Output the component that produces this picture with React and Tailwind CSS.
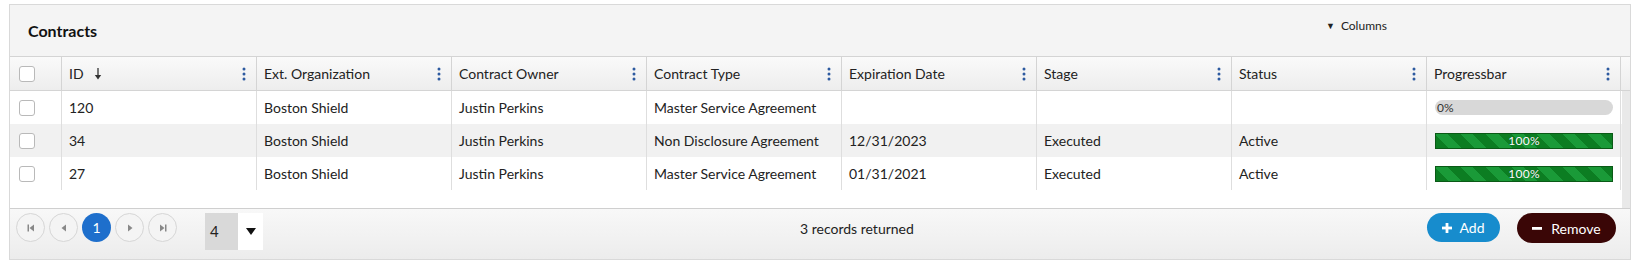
import React from 'react';

const columns = [
  'ID',
  'Ext. Organization',
  'Contract Owner',
  'Contract Type',
  'Expiration Date',
  'Stage',
  'Status',
  'Progressbar',
];

const rows = [
  { id: '120', org: 'Boston Shield', owner: 'Justin Perkins', type: 'Master Service Agreement', date: '', stage: '', status: '', progress: 0 },
  { id: '34', org: 'Boston Shield', owner: 'Justin Perkins', type: 'Non Disclosure Agreement', date: '12/31/2023', stage: 'Executed', status: 'Active', progress: 100 },
  { id: '27', org: 'Boston Shield', owner: 'Justin Perkins', type: 'Master Service Agreement', date: '01/31/2021', stage: 'Executed', status: 'Active', progress: 100 },
];

function Kebab() {
  return (
    <svg width="4" height="14" viewBox="0 0 4 14" className="shrink-0">
      <circle cx="2" cy="2" r="1.5" fill="#2d5aa0" />
      <circle cx="2" cy="7" r="1.5" fill="#2d5aa0" />
      <circle cx="2" cy="12" r="1.5" fill="#2d5aa0" />
    </svg>
  );
}

function SortDown() {
  return (
    <svg width="8" height="12" viewBox="0 0 8 12" className="ml-[10px]">
      <line x1="4" y1="0" x2="4" y2="8" stroke="#333" strokeWidth="1.3" />
      <path d="M0.8 7 L7.2 7 L4 11.5 Z" fill="#333" />
    </svg>
  );
}

function Checkbox() {
  return <div className="w-[16px] h-[16px] rounded-[3px] border border-[#b9b9b9] bg-white" />;
}

function Progress({ value }) {
  if (value === 0) {
    return (
      <div className="w-[178px] h-[15px] rounded-full bg-[#d8d8d8] flex items-center pl-[2px] text-[12px] leading-none text-[#333]">
        0%
      </div>
    );
  }
  return (
    <div className="w-[178px] h-[16px] border border-[#0a5a16] bg-[repeating-linear-gradient(45deg,#0c7d22_0px,#0c7d22_9px,#1a9a38_9px,#1a9a38_18px)] flex items-center justify-center text-[12px] leading-none text-white tracking-[0.3px] [text-shadow:0_0_1px_rgba(0,0,0,0.4)]">
      {value}%
    </div>
  );
}

function PagerButton({ children, active }) {
  return (
    <div
      className={
        active
          ? 'w-[29px] h-[29px] rounded-full bg-[#1e6fcc] flex items-center justify-center text-white text-[14px]'
          : 'w-[29px] h-[29px] rounded-full border border-[#d6d6d6] bg-[#f4f4f4] flex items-center justify-center'
      }
    >
      {children}
    </div>
  );
}

export default function App() {
  return (
    <div className="w-[1635px] h-[263px] bg-white pt-[4px] pl-[9px] font-['Lato','Liberation_Sans',sans-serif] text-[#222]">
      <div className="w-[1622px] border border-[#d9d9d9] flex flex-col">
        {/* Title bar */}
        <div className="h-[51px] bg-[#f4f4f4] flex items-start relative">
          <div className="pl-[18px] pt-[14px] text-[16px] font-bold text-[#111]">Contracts</div>
          <div className="absolute left-[1316px] top-[12px] flex items-center gap-[6px] text-[12px] text-[#222]">
            <span className="text-[9px]">▼</span>
            <span>Columns</span>
          </div>
        </div>

        {/* Header row */}
        <div className="flex h-[35px] border-t border-b border-[#d4d4d4] bg-[linear-gradient(#fafafa,#ededed)]">
          <div className="w-[51px] flex items-center pl-[9px]">
            <Checkbox />
          </div>
          {columns.map((c, i) => (
            <div
              key={c}
              className={
                'w-[195px] border-l border-[#d4d4d4] flex items-center justify-between pl-[7px] pr-[10px] text-[14px] text-[#222]' +
                (i === columns.length - 1 ? ' border-r' : '')
              }
            >
              <div className="flex items-center">
                {c}
                {i === 0 && <SortDown />}
              </div>
              <Kebab />
            </div>
          ))}
        </div>

        {/* Body */}
        <div className="flex h-[117px]">
          <div className="w-[1612px] bg-white">
            {rows.map((r, ri) => {
              const cells = [r.id, r.org, r.owner, r.type, r.date, r.stage, r.status];
              return (
                <div key={r.id} className={'flex h-[33px] ' + (ri === 1 ? 'bg-[#f1f1f1]' : 'bg-white')}>
                  <div className="w-[51px] flex items-center pl-[9px]">
                    <Checkbox />
                  </div>
                  {cells.map((t, ci) => (
                    <div key={ci} className="w-[195px] border-l border-[#dedede] flex items-center pl-[7px] text-[14px]">
                      {t}
                    </div>
                  ))}
                  <div className="w-[195px] border-l border-r border-[#dedede] flex items-center pl-[8px]">
                    <Progress value={r.progress} />
                  </div>
                </div>
              );
            })}
          </div>
          <div className="flex-1 bg-[#e9e9e9]" />
        </div>

        {/* Footer */}
        <div className="h-[51px] border-t border-[#cfcfcf] bg-[linear-gradient(#f8f8f8,#ececec)] flex items-start pt-[4px] pl-[6px] pr-[14px]">
          <div className="flex gap-[4px]">
            <PagerButton>
              <svg width="8" height="8" viewBox="0 0 8 8"><rect x="0.5" y="0.5" width="1.5" height="7" fill="#888" /><path d="M7 0.5 L7 7.5 L2.5 4 Z" fill="#888" /></svg>
            </PagerButton>
            <PagerButton>
              <svg width="6" height="8" viewBox="0 0 6 8"><path d="M5 0.5 L5 7.5 L0.5 4 Z" fill="#888" /></svg>
            </PagerButton>
            <PagerButton active>1</PagerButton>
            <PagerButton>
              <svg width="6" height="8" viewBox="0 0 6 8"><path d="M1 0.5 L1 7.5 L5.5 4 Z" fill="#888" /></svg>
            </PagerButton>
            <PagerButton>
              <svg width="8" height="8" viewBox="0 0 8 8"><path d="M1 0.5 L1 7.5 L5.5 4 Z" fill="#888" /><rect x="6" y="0.5" width="1.5" height="7" fill="#888" /></svg>
            </PagerButton>
          </div>
          <div className="ml-[28px] flex h-[37px]">
            <div className="w-[33px] bg-[#d9d9d9] flex items-center pl-[5px] text-[15px] text-[#222]">4</div>
            <div className="w-[25px] bg-white flex items-center justify-center">
              <svg width="10" height="7" viewBox="0 0 10 7"><path d="M0 0 L10 0 L5 7 Z" fill="#111" /></svg>
            </div>
          </div>
          <div className="ml-[537px] pt-[5px] text-[14px] text-[#222]">3 records returned</div>
          <div className="ml-auto flex gap-[17px]">
            <div className="h-[29px] w-[73px] rounded-full bg-[#178ccd] flex items-center justify-center gap-[7px] text-white text-[14px]">
              <svg width="10" height="10" viewBox="0 0 10 10"><rect x="3.6" y="0" width="2.8" height="10" fill="#fff" /><rect x="0" y="3.6" width="10" height="2.8" fill="#fff" /></svg>
              Add
            </div>
            <div className="h-[30px] w-[99px] rounded-full bg-[#3a0606] flex items-center justify-center gap-[9px] text-white text-[14px]">
              <svg width="10" height="3" viewBox="0 0 10 3"><rect x="0" y="0" width="10" height="2.8" fill="#fff" /></svg>
              Remove
            </div>
          </div>
        </div>
      </div>
    </div>
  );
}
